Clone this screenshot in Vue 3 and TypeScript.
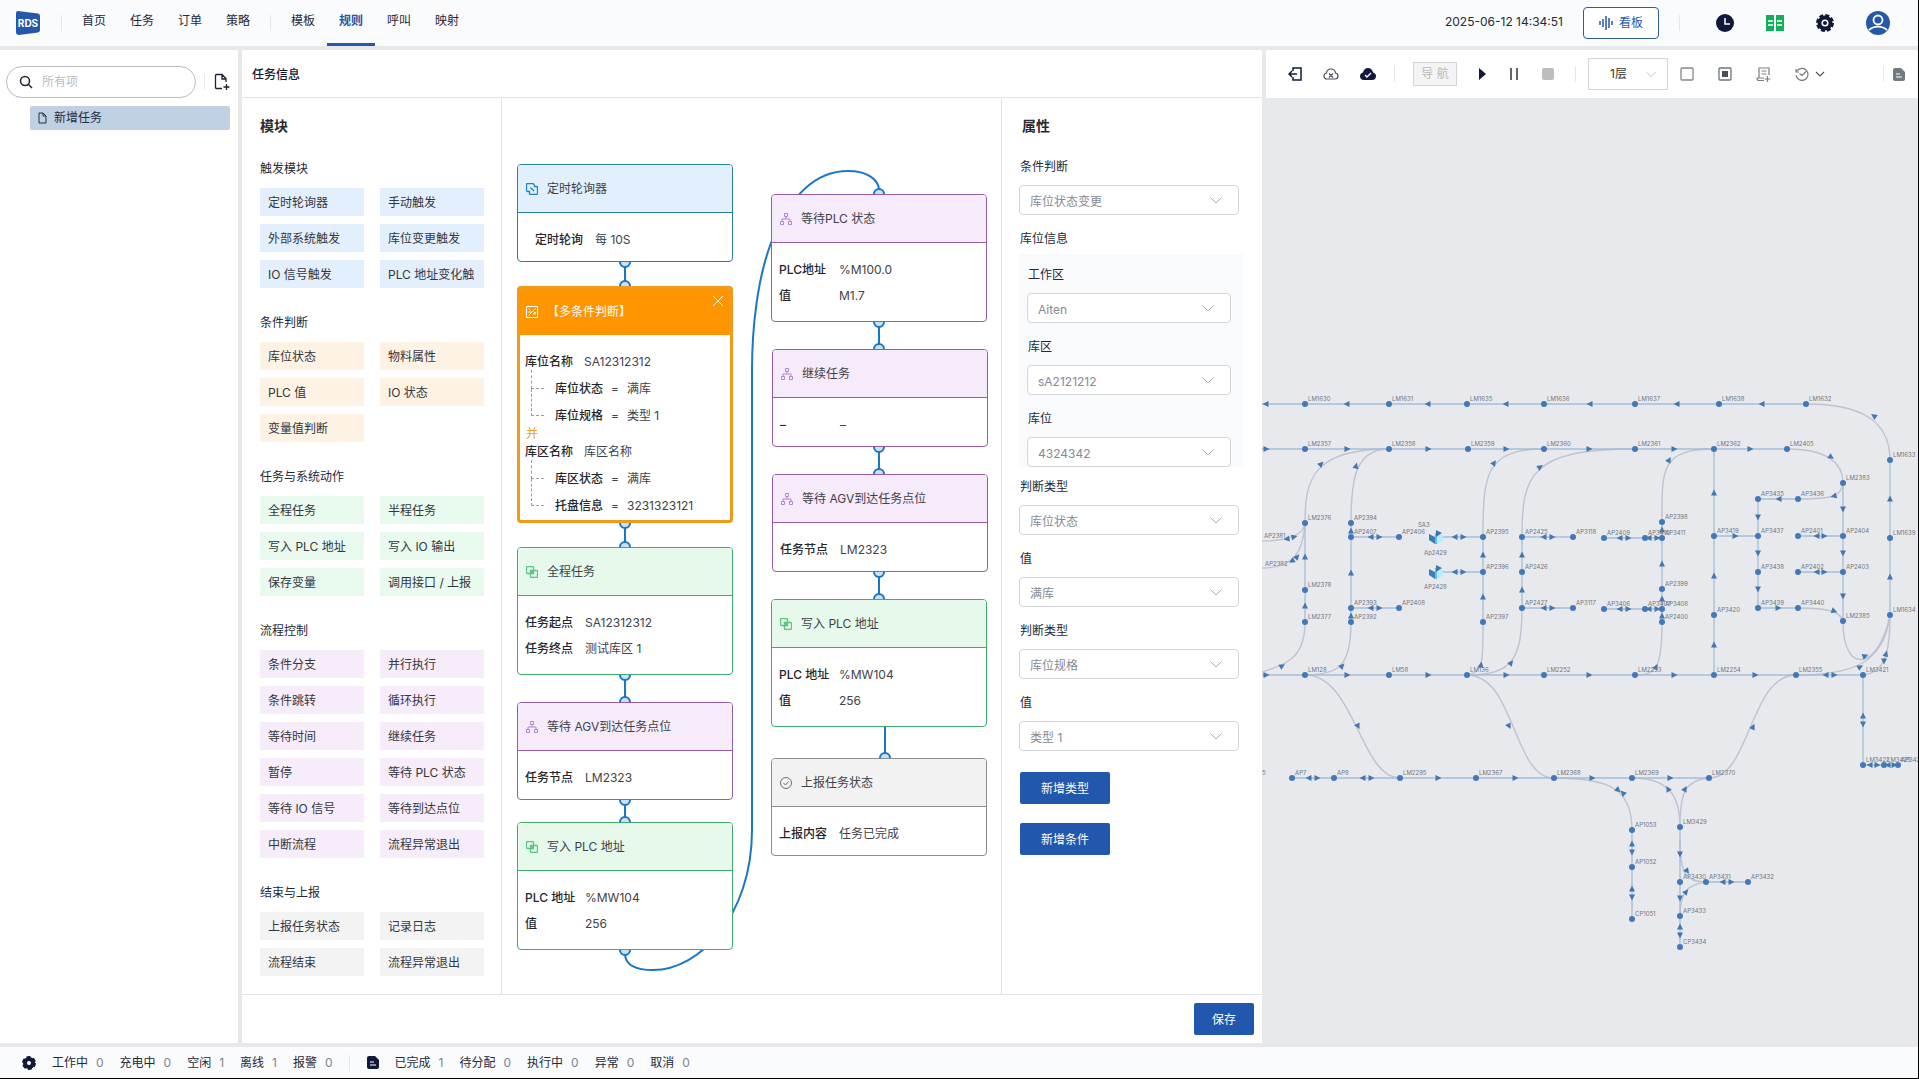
<script setup lang="ts">
import { ref } from 'vue'

type Tone = 'blue' | 'orange' | 'green' | 'purple' | 'gray'
interface Section { title: string; tone: Tone; items: string[] }
interface Row { label: string; value: string }
interface FlowNode { title: string; tone: Tone; icon: string; x: number; y: number; h: number; rows: Row[]; indent?: boolean }
interface Field { id: string; label: string; value: string }
interface Stat { label: string; value: number }

const navLeft = ['首页', '任务', '订单', '策略']
const navRight = ['模板', '规则', '呼叫', '映射']
const keyword = ref('')

const sections: Section[] = [
  { title: '触发模块', tone: 'blue', items: ['定时轮询器', '手动触发', '外部系统触发', '库位变更触发', 'IO 信号触发', 'PLC 地址变化触'] },
  { title: '条件判断', tone: 'orange', items: ['库位状态', '物料属性', 'PLC 值', 'IO 状态', '变量值判断'] },
  { title: '任务与系统动作', tone: 'green', items: ['全程任务', '半程任务', '写入 PLC 地址', '写入 IO 输出', '保存变量', '调用接口 / 上报'] },
  { title: '流程控制', tone: 'purple', items: ['条件分支', '并行执行', '条件跳转', '循环执行', '等待时间', '继续任务', '暂停', '等待 PLC 状态', '等待 IO 信号', '等待到达点位', '中断流程', '流程异常退出'] },
  { title: '结束与上报', tone: 'gray', items: ['上报任务状态', '记录日志', '流程结束', '流程异常退出'] },
]

const flowNodes: FlowNode[] = [
  { title: '定时轮询器', tone: 'blue', icon: 'timer', x: 15, y: 66, h: 98, indent: true, rows: [{ label: '定时轮询', value: '每 10S' }] },
  { title: '全程任务', tone: 'green', icon: 'copy', x: 15, y: 449, h: 128, rows: [{ label: '任务起点', value: 'SA12312312' }, { label: '任务终点', value: '测试库区 1' }] },
  { title: '等待 AGV到达任务点位', tone: 'purple', icon: 'tree', x: 15, y: 604, h: 98, rows: [{ label: '任务节点', value: 'LM2323' }] },
  { title: '写入 PLC 地址', tone: 'green', icon: 'copy', x: 15, y: 724, h: 128, rows: [{ label: 'PLC 地址', value: '%MW104' }, { label: '值', value: '256' }] },
  { title: '等待PLC 状态', tone: 'purple', icon: 'tree', x: 269, y: 96, h: 128, rows: [{ label: 'PLC地址', value: '%M100.0' }, { label: '值', value: 'M1.7' }] },
  { title: '继续任务', tone: 'purple', icon: 'tree', x: 270, y: 251, h: 98, rows: [{ label: '–', value: '–' }] },
  { title: '等待 AGV到达任务点位', tone: 'purple', icon: 'tree', x: 270, y: 376, h: 98, rows: [{ label: '任务节点', value: 'LM2323' }] },
  { title: '写入 PLC 地址', tone: 'green', icon: 'copy', x: 269, y: 501, h: 128, rows: [{ label: 'PLC 地址', value: '%MW104' }, { label: '值', value: '256' }] },
  { title: '上报任务状态', tone: 'gray', icon: 'done', x: 269, y: 660, h: 98, rows: [{ label: '上报内容', value: '任务已完成' }] },
]

const conditions = [
  { label: '库位名称', value: 'SA12312312', subs: [{ label: '库位状态', value: '满库' }, { label: '库位规格', value: '类型 1' }] },
  { label: '库区名称', value: '库区名称', subs: [{ label: '库区状态', value: '满库' }, { label: '托盘信息', value: '3231323121' }] },
]

// x, y of every half-hidden port; links join ports of neighbouring cards
const ports: [number, number][] = [
  [123, 164], [123, 188], [123, 425], [123, 449], [123, 577], [123, 604], [123, 702], [123, 724], [123, 852],
  [377, 96], [377, 224], [377, 251], [377, 349], [377, 376], [377, 474], [377, 501], [383, 660],
]
const links = [
  'M123 169V183', 'M123 430V444', 'M123 582V599', 'M123 707V719',
  'M377 229V246', 'M377 354V371', 'M377 479V496', 'M383 628V655',
  'M123 857C124 867 134 872 151 872C198 872 250 817 250 732V272C250 232 255 182 269 145C288 97 313 73 346 73C366 73 376 82 377 91',
]

const groupFields: Field[] = [
  { id: 'area', label: '工作区', value: 'Aiten' },
  { id: 'zone', label: '库区', value: 'sA2121212' },
  { id: 'slot', label: '库位', value: '4324342' },
]
const tailFields: Field[] = [
  { id: 'type-a', label: '判断类型', value: '库位状态' },
  { id: 'value-a', label: '值', value: '满库' },
  { id: 'type-b', label: '判断类型', value: '库位规格' },
  { id: 'value-b', label: '值', value: '类型 1' },
]

const robotStats: Stat[] = [
  { label: '工作中', value: 0 }, { label: '充电中', value: 0 }, { label: '空闲', value: 1 }, { label: '离线', value: 1 }, { label: '报警', value: 0 },
]
const taskStats: Stat[] = [
  { label: '已完成', value: 1 }, { label: '待分配', value: 0 }, { label: '执行中', value: 0 }, { label: '异常', value: 0 }, { label: '取消', value: 0 },
]

const points: [string, number, number][] = [
  ['LM1630', 1305, 404], ['LM1631', 1389, 404], ['LM1635', 1467, 404], ['LM1636', 1544, 404], ['LM1637', 1635, 404], ['LM1638', 1719, 404], ['LM1632', 1806, 404],
  ['LM2357', 1305, 449], ['LM2358', 1389, 449], ['LM2359', 1468, 449], ['LM2360', 1544, 449], ['LM2361', 1635, 449], ['LM2362', 1714, 449], ['LM2405', 1787, 449],
  ['LM128', 1305, 675], ['LM58', 1389, 675], ['LM136', 1467, 675], ['LM2252', 1544, 675], ['LM2253', 1635, 675], ['LM2254', 1714, 675], ['LM2355', 1796, 675], ['LM3421', 1863, 675],
  ['LM2376', 1305, 523], ['LM2378', 1305, 590], ['LM2377', 1305, 622],
  ['AP2394', 1351, 523], ['AP2407', 1351, 537], ['AP2406', 1399, 537], ['AP2393', 1351, 608], ['AP2408', 1399, 608], ['AP2392', 1351, 622],
  ['AP2395', 1483, 537], ['AP2396', 1483, 572], ['AP2397', 1483, 622],
  ['AP2425', 1522, 537], ['AP2426', 1522, 572], ['AP2427', 1522, 608], ['AP3118', 1573, 537], ['AP3117', 1573, 608],
  ['AP2409', 1604, 538], ['AP3410', 1645, 538], ['AP3411', 1662, 538], ['AP3406', 1604, 609], ['AP3407', 1645, 609], ['AP3408', 1662, 609],
  ['AP2398', 1662, 522], ['AP2399', 1662, 589], ['AP2400', 1662, 622],
  ['AP3419', 1714, 536], ['AP3420', 1714, 615], ['AP3435', 1758, 499], ['AP3436', 1798, 499], ['AP3437', 1758, 536], ['AP3438', 1758, 572], ['AP3439', 1758, 608], ['AP3440', 1798, 608],
  ['AP2401', 1798, 536], ['AP2402', 1798, 572], ['AP2404', 1843, 536], ['AP2403', 1843, 572], ['LM2383', 1843, 483], ['LM2385', 1843, 621],
  ['LM1633', 1890, 460], ['LM1639', 1890, 538], ['LM1634', 1890, 615],
  ['LM3422', 1863, 765], ['LM3425', 1884, 765], ['AP3426', 1898, 765],
  ['AP7', 1292, 778], ['AP8', 1334, 778], ['LM2295', 1400, 778], ['LM2367', 1476, 778], ['LM2368', 1554, 778], ['LM2369', 1632, 778], ['LM2370', 1709, 778],
  ['AP1053', 1632, 830], ['AP1052', 1632, 867], ['CP1051', 1632, 919],
  ['LM3429', 1680, 827], ['AP3430', 1680, 882], ['AP3431', 1706, 882], ['AP3432', 1748, 882], ['AP3433', 1680, 916], ['CP3434', 1680, 947],
]

const captions: [string, number, number][] = [
  ['AP2381', 1264, 538], ['AP2382', 1265, 566], ['SA3', 1418, 527], ['Ap2429', 1424, 555], ['AP2428', 1424, 589], ['5', 1262, 775],
]

// x, y, heading in degrees (0 = right, 90 = down)
const arrows: [number, number, number][] = [
  [1266, 404, 180], [1347, 404, 180], [1428, 404, 180], [1506, 404, 180], [1590, 404, 180], [1677, 404, 180], [1762, 404, 180], [1874, 416, 215],
  [1266, 449, 0], [1347, 449, 0], [1428, 449, 0], [1506, 449, 0], [1589, 449, 0], [1674, 449, 0], [1750, 449, 0], [1831, 457, 32],
  [1266, 675, 0], [1347, 675, 0], [1428, 675, 0], [1506, 675, 0], [1589, 675, 0], [1674, 675, 0], [1755, 675, 0], [1826, 675, 180], [1834, 675, 0],
  [1321, 464, 315], [1282, 666, 330], [1305, 557, 270], [1305, 606, 270], [1287, 539, 170], [1294, 537, 345], [1292, 561, 150], [1297, 557, 310],
  [1356, 466, 285], [1351, 531, 270], [1351, 573, 270], [1351, 616, 270], [1342, 666, 315], [1371, 537, 180], [1379, 537, 0], [1371, 608, 180], [1379, 608, 0],
  [1455, 537, 180], [1463, 537, 0], [1455, 572, 180], [1463, 572, 0],
  [1494, 463, 305], [1483, 555, 270], [1483, 597, 270], [1481, 665, 280],
  [1540, 467, 325], [1522, 555, 270], [1522, 590, 270], [1511, 663, 310], [1544, 537, 180], [1552, 537, 0], [1544, 608, 180], [1552, 608, 0],
  [1620, 538, 180], [1628, 538, 0], [1649, 538, 180], [1657, 538, 0], [1620, 609, 180], [1628, 609, 0], [1649, 609, 180], [1657, 609, 0],
  [1669, 460, 300], [1662, 530, 270], [1662, 564, 270], [1662, 599, 270], [1662, 616, 270], [1656, 667, 300],
  [1714, 493, 270], [1714, 576, 270], [1714, 645, 270], [1735, 536, 0], [1779, 499, 180], [1834, 496, 165], [1778, 608, 0], [1834, 611, 20],
  [1758, 517, 90], [1758, 553, 90], [1758, 589, 90], [1817, 536, 180], [1824, 536, 0], [1817, 572, 180], [1824, 572, 0],
  [1843, 509, 90], [1843, 553, 90], [1843, 596, 90], [1865, 656, 340], [1860, 667, 330], [1884, 661, 90], [1886, 654, 285],
  [1890, 499, 270], [1890, 577, 270], [1863, 716, 270], [1863, 724, 90], [1870, 765, 180], [1877, 765, 0], [1888, 765, 180], [1894, 765, 0],
  [1309, 778, 180], [1317, 778, 0], [1363, 778, 180], [1371, 778, 0], [1438, 778, 0], [1515, 778, 0], [1592, 778, 0], [1670, 778, 0],
  [1358, 726, 62], [1509, 726, 62], [1753, 727, 295], [1618, 790, 40], [1623, 793, 225], [1668, 789, 240], [1685, 789, 300],
  [1632, 844, 270], [1632, 852, 90], [1632, 889, 270], [1632, 897, 90], [1680, 854, 90], [1680, 898, 90], [1680, 927, 270], [1680, 935, 90],
  [1687, 871, 55], [1686, 892, 310], [1723, 882, 180], [1731, 882, 0],
]

const tracks = [
  'M1262 404H1806', 'M1262 449H1787', 'M1262 675H1863', 'M1292 778H1709', 'M1305 523V622', 'M1351 523V622', 'M1351 537H1399', 'M1351 608H1399',
  'M1440 537H1483', 'M1440 572H1483', 'M1483 537V622', 'M1522 537V608', 'M1522 537H1573', 'M1522 608H1573', 'M1604 538H1662', 'M1604 609H1662',
  'M1662 522V622', 'M1714 449V675', 'M1714 536H1758', 'M1758 499V608', 'M1758 499H1798', 'M1758 608H1798', 'M1798 536H1843', 'M1798 572H1843',
  'M1843 483V621', 'M1890 460V615', 'M1863 675V765H1898', 'M1632 830V919', 'M1680 827V947', 'M1706 882H1748',
]
const bends = [
  'M1806 404C1860 404 1890 420 1890 460', 'M1787 449C1822 449 1843 460 1843 483', 'M1305 523C1305 480 1312 449 1389 449', 'M1262 672C1290 664 1305 655 1305 622',
  'M1262 541C1285 541 1304 536 1305 523', 'M1262 568C1294 568 1303 552 1305 523', 'M1351 523C1351 480 1355 449 1389 449', 'M1351 622C1351 665 1340 675 1305 675',
  'M1483 537C1483 475 1485 449 1544 449', 'M1483 622C1483 660 1484 673 1467 675', 'M1522 537C1522 475 1530 449 1635 449', 'M1522 608C1522 660 1512 675 1467 675',
  'M1662 522C1662 470 1660 449 1714 449', 'M1662 622C1662 665 1658 675 1635 675', 'M1843 483C1842 497 1830 499 1798 499', 'M1798 608C1830 608 1840 612 1843 621',
  'M1843 621C1843 678 1880 668 1890 615', 'M1796 675C1850 675 1884 665 1890 615', 'M1863 675C1886 673 1890 650 1890 615',
  'M1305 675C1355 675 1360 778 1400 778', 'M1467 675C1515 675 1513 778 1554 778', 'M1709 778C1750 778 1750 675 1796 675',
  'M1554 778C1612 778 1632 790 1632 830', 'M1632 778C1668 778 1680 795 1680 827', 'M1709 778C1684 780 1680 795 1680 827',
  'M1680 840C1680 874 1686 882 1706 882', 'M1680 916C1680 890 1690 884 1706 882',
]
</script>

<template>
  <div class="app">
    <header class="topbar">
      <svg class="logo" width="26" height="26" viewBox="0 0 26 26" aria-label="RDS">
        <path d="M3 1L23 3.600Q25 4 25 6V20Q25 22 23 22.400L4 25Q1 25 1 22V3Q1 1 3 1Z" fill="#2558a8" />
        <text x="13" y="17" text-anchor="middle" font-size="10" font-weight="700" fill="#fff">RDS</text>
      </svg>
      <i class="sep"></i>
      <nav class="nav">
        <a v-for="n in navLeft" :key="n" href="#">{{ n }}</a>
      </nav>
      <i class="sep"></i>
      <nav class="nav">
        <a v-for="n in navRight" :key="n" href="#" :class="{ active: n === '规则' }">{{ n }}</a>
      </nav>
      <div class="top-right">
        <time>2025-06-12 14:34:51</time>
        <button class="board" type="button">
          <svg width="14" height="16" viewBox="0 0 14 16" stroke="#2558a8" stroke-width="1.500" fill="none"><path d="M1 6v4M4 4v8M7 1v14M10 3v10M13 6v4" /></svg>
          看板
        </button>
        <i class="sep"></i>
        <div class="top-icons">
          <button type="button" aria-label="历史"><svg width="18" height="18" viewBox="0 0 18 18"><circle cx="9" cy="9" r="9" fill="#12183a" /><path d="M9 4v6h5" fill="none" stroke="#fff" stroke-width="1.500" /></svg></button>
          <button type="button" aria-label="地图"><svg width="18" height="18" viewBox="0 0 18 18"><path d="M0 1h8v16H0zM10 1h8v16h-8z" fill="#12b05c" /><path d="M2 7h5M2 11h5M11 7h5M11 11h5" stroke="#fff" stroke-width="1.500" /></svg></button>
          <button type="button" aria-label="设置"><svg width="18" height="18" viewBox="0 0 18 18"><circle cx="9" cy="9" r="7.500" fill="#12183a" /><circle cx="9" cy="9" r="7.500" fill="none" stroke="#12183a" stroke-width="3" stroke-dasharray="3.900 2" /><circle cx="9" cy="9" r="2.800" fill="none" stroke="#fff" stroke-width="1.500" /></svg></button>
          <button type="button" aria-label="用户"><svg width="24" height="24" viewBox="0 0 24 24"><circle cx="12" cy="12" r="12" fill="#2558a8" /><circle cx="12" cy="9" r="4.500" fill="none" stroke="#fff" stroke-width="1.800" /><path d="M3 19C8 14.500 16 14.500 21 19" fill="none" stroke="#fff" stroke-width="1.800" /></svg></button>
        </div>
      </div>
    </header>

    <main class="workspace">
      <aside class="sidebar">
        <div class="search-row">
          <label class="search">
            <svg width="14" height="14" viewBox="0 0 14 14" fill="none" stroke="#1d2233" stroke-width="1.500"><circle cx="6" cy="6" r="4.500" /><path d="M9 9l4 4" /></svg>
            <input v-model="keyword" type="text" placeholder="所有项" aria-label="所有项" />
          </label>
          <i class="sep"></i>
          <button class="add" type="button" aria-label="新增">
            <svg width="16" height="18" viewBox="0 0 16 18" fill="none" stroke="#1d2233" stroke-width="1.300"><path d="M8 15.500H2.500q-1 0-1-1V2.500q0-1 1-1H8l4 4V9M8 1.500V6h4M12.500 11v6M9.500 14h6" /></svg>
          </button>
        </div>
        <a class="task" href="#">
          <svg width="9" height="12" viewBox="0 0 9 12" fill="none" stroke="#1d2c45"><path d="M1 1h4l3 3v7H1zM5 1v3h3" /></svg>
          新增任务
        </a>
      </aside>

      <section class="editor">
        <h1>任务信息</h1>
        <div class="columns">
          <div class="modules">
            <h2>模块</h2>
            <section v-for="s in sections" :key="s.title" class="group">
              <h3>{{ s.title }}</h3>
              <div class="chips">
                <button v-for="i in s.items" :key="i" type="button" class="chip" :class="s.tone">{{ i }}</button>
              </div>
            </section>
          </div>

          <div class="canvas">
            <svg class="wires" aria-hidden="true">
              <path v-for="l in links" :key="l" :d="l" />
              <circle v-for="(p, i) in ports" :key="i" :cx="p[0]" :cy="p[1]" r="5" />
            </svg>
            <article v-for="(n, i) in flowNodes" :key="i" class="card" :class="[n.tone, { indent: n.indent }]" :style="{ left: n.x + 'px', top: n.y + 'px', height: n.h + 'px' }">
              <header>
                <svg width="12" height="12" viewBox="0 0 12 12" fill="none" stroke="currentColor">
                  <path v-if="n.icon === 'timer'" stroke-width="1.300" d="M2.500 8.500H1.500Q.5 8.500 .5 7.500V1.500Q.5.5 1.500.5H6.500Q8.500.5 8.500 3.500H10.500Q11.500 3.500 11.500 4.500V10.500Q11.500 11.500 10.500 11.500H4.500Q3.500 11.500 3.500 10.500V8.500H2M4.500 4.500L8 8" />
                  <path v-else-if="n.icon === 'copy'" stroke-width="1.300" d="M1.500.5h5q1 0 1 1v5q0 1-1 1h-5q-1 0-1-1v-5q0-1 1-1zM5.500 4.500h5q1 0 1 1v5q0 1-1 1h-5q-1 0-1-1v-5q0-1 1-1zM4 4l4 4" />
                  <path v-else-if="n.icon === 'tree'" d="M4.500.5h3v3h-3zM.5 8.500h3v3h-3zM8.500 8.500h3v3h-3zM6 3.500V6M2 8.500V6h8v2.500" />
                  <path v-else d="M11.500 6A5.500 5.500 0 1 1 .5 6A5.500 5.500 0 1 1 11.500 6zM3.500 6L5.500 8L8.500 4.500" />
                </svg>
                <h4>{{ n.title }}</h4>
              </header>
              <dl>
                <div v-for="r in n.rows" :key="r.label" class="row"><dt>{{ r.label }}</dt><dd>{{ r.value }}</dd></div>
              </dl>
            </article>

            <article class="card orange condition">
              <header>
                <svg width="12" height="12" viewBox="0 0 12 12" fill="none" stroke="currentColor"><path d="M.5.5h11v11H.5zM2.500 9.500l7-7M3 2.500l1.500 2M7 8h3M8 6.500h2M2.500 6h3" /></svg>
                <h4>【多条件判断】</h4>
                <button class="close" type="button" aria-label="关闭"><svg width="10" height="10" viewBox="0 0 10 10" stroke="#fff"><path d="M0 0l10 10M10 0L0 10" /></svg></button>
              </header>
              <div class="rules">
                <template v-for="(c, i) in conditions" :key="c.label">
                  <p v-if="i" class="and">并</p>
                  <div class="rule"><b>{{ c.label }}</b><span>{{ c.value }}</span></div>
                  <ul>
                    <li v-for="s in c.subs" :key="s.label"><i class="branch"></i><b>{{ s.label }}</b><em>=</em><span>{{ s.value }}</span></li>
                  </ul>
                </template>
              </div>
            </article>
          </div>

          <form class="props" @submit.prevent>
            <h2>属性</h2>
            <div class="field">
              <label for="judge">条件判断</label>
              <div class="select"><select id="judge"><option>库位状态变更</option></select><svg width="12" height="7" viewBox="0 0 12 7"><path d="M.5.5L6 6L11.500.5" /></svg></div>
            </div>
            <p class="caption">库位信息</p>
            <fieldset aria-label="库位信息">
              <div v-for="f in groupFields" :key="f.id" class="field">
                <label :for="f.id">{{ f.label }}</label>
                <div class="select"><select :id="f.id"><option>{{ f.value }}</option></select><svg width="12" height="7" viewBox="0 0 12 7"><path d="M.5.5L6 6L11.500.5" /></svg></div>
              </div>
            </fieldset>
            <div v-for="f in tailFields" :key="f.id" class="field">
              <label :for="f.id">{{ f.label }}</label>
              <div class="select"><select :id="f.id"><option>{{ f.value }}</option></select><svg width="12" height="7" viewBox="0 0 12 7"><path d="M.5.5L6 6L11.500.5" /></svg></div>
            </div>
            <div class="actions">
              <button class="primary" type="button">新增类型</button>
              <button class="primary" type="button">新增条件</button>
            </div>
          </form>
        </div>
        <footer class="savebar"><button class="primary save" type="button">保存</button></footer>
      </section>

      <section class="map">
        <div class="tools">
          <div class="set clouds">
            <button type="button" aria-label="退出"><svg width="14" height="14" viewBox="0 0 14 14" fill="none" stroke="#12183a" stroke-width="1.500"><path d="M5 4V1h8v12H5v-3M9 7H1M4 4L1 7l3 3" /></svg></button>
            <button type="button" aria-label="取消上传"><svg width="16" height="12" viewBox="0 0 16 12" fill="none" stroke="#4a4e5a" stroke-width="1.200"><path d="M4 11Q1 11 1 8Q1 5.500 3.500 5Q4 1 8 1T12.500 5Q15 5.500 15 8Q15 11 12 11ZM6 5.500l4 4M10 5.500l-4 4" /></svg></button>
            <button type="button" aria-label="上传完成"><svg width="16" height="12" viewBox="0 0 16 12"><path d="M4 12Q0 12 0 8Q0 5.500 3 4.500Q4 0 8 0T13 4.500Q16 5.500 16 8Q16 12 12 12Z" fill="#12183a" /><path d="M5 7l2 2 4-4" fill="none" stroke="#fff" stroke-width="1.300" /></svg></button>
          </div>
          <i class="sep"></i>
          <button class="navi" type="button" disabled>导 航</button>
          <div class="set play">
            <button type="button" aria-label="播放"><svg width="8" height="12" viewBox="0 0 8 12"><path d="M1 0l7 6-7 6z" fill="#12183a" /></svg></button>
            <button type="button" aria-label="暂停"><svg width="8" height="12" viewBox="0 0 8 12"><path d="M1 0v12M7 0v12" stroke="#333" stroke-width="1.500" /></svg></button>
            <button type="button" aria-label="停止"><svg width="12" height="12" viewBox="0 0 12 12"><rect width="12" height="12" rx="2" fill="#bdbdbd" /></svg></button>
          </div>
          <i class="sep"></i>
          <div class="select floor"><select aria-label="楼层"><option>1层</option></select><svg width="10" height="7" viewBox="0 0 12 7"><path d="M.5.5L6 6L11.500.5" /></svg></div>
          <div class="set views">
            <button type="button" aria-label="框选"><svg width="14" height="14" viewBox="0 0 14 14" fill="none" stroke="#858585" stroke-width="1.300"><rect x="1" y="1" width="12" height="12" rx="1" /></svg></button>
            <button type="button" aria-label="居中"><svg width="14" height="14" viewBox="0 0 14 14" fill="none" stroke="#6f7378" stroke-width="1.300"><rect x="1" y="1" width="12" height="12" rx="1" /><path d="M4 4h6v6H4z" fill="#4a4e5a" stroke="none" /></svg></button>
            <button type="button" aria-label="添加备注"><svg width="15" height="15" viewBox="0 0 15 15" fill="none" stroke="#7c7e82" stroke-width="1.200"><path d="M8 13.500H3q-2 0-2-2.500M3 11V1h10v7M5.500 4h5M5.500 7h5M1 11h7M11.500 9v6M8.500 12h6" /></svg></button>
            <button type="button" aria-label="校验"><svg width="14" height="14" viewBox="0 0 14 14" fill="none" stroke="#777" stroke-width="1.200"><path d="M1 2v3h3M1 8A6 6 0 1 0 2 4M4.500 6.500l2.500 2 4-4" /></svg><svg width="10" height="6" viewBox="0 0 10 6" fill="none" stroke="#555" stroke-width="1.200"><path d="M1 1l4 4 4-4" /></svg></button>
          </div>
          <div class="set last">
            <i class="sep"></i>
            <button type="button" aria-label="日志"><svg width="12" height="13" viewBox="0 0 12 13"><path d="M2 0h6l4 4v7q0 2-2 2H2q-2 0-2-2V2q0-2 2-2z" fill="#707a80" /><path d="M3 6h4M3 9h6" stroke="#fff" stroke-width="1.200" /></svg></button>
          </div>
        </div>
        <svg class="plan" viewBox="1262 98 656 945" preserveAspectRatio="xMinYMin meet">
          <path v-for="t in bends" :key="t" :d="t" class="bend" stroke-width="1.400" />
          <path v-for="t in tracks" :key="t" :d="t" class="track" stroke-width="1.300" />
          <g v-for="y in [537, 572]" :key="y" :transform="`translate(1429 ${y - 7})`">
            <path d="M7 3l7 2v6l-7 3z" fill="#b9ecfb" /><path d="M0 4l6 3v7l-6-4z" fill="#3d7cb8" /><path d="M6 3l2-1v12l-2 0z" fill="#58c3ef" /><path d="M7 0l6 3-6 4z" fill="#3f76b5" />
          </g>
          <path v-for="(a, i) in arrows" :key="i" d="M3.500 0L-2.500-3V3Z" class="arrow" :transform="`translate(${a[0]} ${a[1]}) rotate(${a[2]})`" />
          <circle v-for="p in points" :key="p[0]" :cx="p[1]" :cy="p[2]" r="3" class="dot" />
          <text v-for="p in points" :key="p[0]" :x="p[1] + 3" :y="p[2] - 3">{{ p[0] }}</text>
          <text v-for="c in captions" :key="c[0]" :x="c[1]" :y="c[2]">{{ c[0] }}</text>
        </svg>
      </section>
    </main>

    <footer class="statusbar">
      <svg width="14" height="14" viewBox="0 0 14 14"><circle cx="7" cy="7" r="6" fill="#12183a" /><circle cx="7" cy="7" r="6" fill="none" stroke="#12183a" stroke-width="2" stroke-dasharray="4 2.280" /><circle cx="7" cy="7" r="2" fill="#fff" /></svg>
      <dl class="stats"><div v-for="s in robotStats" :key="s.label"><dt>{{ s.label }}</dt><dd>{{ s.value }}</dd></div></dl>
      <i class="sep"></i>
      <svg width="12" height="13" viewBox="0 0 12 13"><path d="M2 0h6l4 4v7q0 2-2 2H2q-2 0-2-2V2q0-2 2-2z" fill="#12183a" /><path d="M3 6h4M3 9h6" stroke="#fff" stroke-width="1.200" /></svg>
      <dl class="stats"><div v-for="s in taskStats" :key="s.label"><dt>{{ s.label }}</dt><dd>{{ s.value }}</dd></div></dl>
    </footer>
  </div>
</template>

<style>
body { margin: 0; background: #e8e8ea; }
</style>

<style scoped>
* { box-sizing: border-box; }
.app { min-height: 100vh; display: flex; flex-direction: column; border-right: 1px solid #000; border-bottom: 1px solid #000; background: #e8e8ea; color: #242938; font: 12px/20px Inter, "Noto Sans CJK SC", sans-serif; overflow: hidden; }
h1, h2, h3, h4, p, dl, dd, ul, fieldset { margin: 0; padding: 0; border: 0; font-size: 12px; font-weight: 400; list-style: none; }
button, input, select { font: inherit; color: inherit; margin: 0; padding: 0; border: 0; background: none; }
a { color: inherit; text-decoration: none; }
svg { display: block; flex: none; }
.sep { flex: none; width: 1px; height: 16px; background: #e6e7ea; }

.topbar { display: flex; align-items: center; height: 46px; padding-left: 15px; background: #fafbfd; }
.logo { margin-right: 20px; }
.nav { display: flex; padding: 0 8px; align-self: stretch; }
.nav a { width: 48px; text-align: center; padding-top: 11px; border-bottom: 3px solid transparent; }
.nav a.active { color: #2558a8; font-weight: 700; border-color: #2558a8; }
.top-right { display: flex; align-items: center; margin-left: auto; padding-right: 28px; }
.top-right time { margin-top: -2px; }
.board { display: flex; align-items: center; justify-content: center; gap: 6px; width: 76px; height: 32px; margin: 0 20px; border: 1px solid #2f5b97; border-radius: 4px; color: #2558a8; background: #fff; }
.top-icons { display: flex; align-items: center; gap: 32px; margin-left: 36px; }

.workspace { flex: 1; display: flex; padding: 4px 0; }
.sidebar { flex: none; width: 238px; margin-right: 4px; padding: 16px 8px 0 6px; background: #fff; }
.search-row { display: flex; align-items: center; }
.search { flex: 1; min-width: 0; display: flex; align-items: center; gap: 9px; height: 32px; padding: 0 12px; border: 1px solid #b9bac6; border-radius: 16px; }
.search input { flex: 1; min-width: 0; outline: none; }
.search input::placeholder { color: #b9bbc2; opacity: 1; }
.search-row .sep { margin: 0 9px 0 8px; }
.task { display: flex; align-items: center; gap: 7px; height: 24px; margin: 8px 0 0 24px; padding-left: 8px; border-radius: 2px; background: #c0d0e3; color: #1d2c45; }

.editor { flex: none; width: 1020px; display: flex; flex-direction: column; background: #fff; }
h1 { height: 48px; padding: 15px 10px 0; border-bottom: 1px solid #e2e3e6; font-weight: 500; color: #12162e; }
h2 { font-size: 14px; font-weight: 700; color: #2b2b2f; height: 20px; }
.columns { flex: 1; display: flex; }
.modules { flex: none; width: 260px; padding: 18px 17px 17px 18px; border-right: 1px solid #e2e3e6; }
.modules h2 { margin-bottom: 23px; }
.group + .group { margin-top: 25px; }
.chips { display: grid; grid-template-columns: 104px 104px; gap: 8px 16px; margin-top: 9px; }
.chip { height: 28px; padding: 2px 0 0 8px; text-align: left; white-space: nowrap; color: #33363f; }
.chip.blue { background: #e4effd; }
.chip.orange { background: #fef2e4; }
.chip.green { background: #e9faee; }
.chip.purple { background: #f6ecfa; }
.chip.gray { background: #f3f3f3; }

.canvas { flex: 1; position: relative; }
.wires { position: absolute; inset: 0; width: 100%; height: 100%; }
.wires path { fill: none; stroke: #1b76c6; stroke-width: 2; }
.wires circle { fill: #c9e2fa; stroke: #1b76c6; stroke-width: 2; }
.card { position: absolute; width: 216px; border: 1px solid var(--line); border-radius: 4px; background: #fff; overflow: hidden; color: #3f4148; }
.card.blue { --line: #2a8094; --fill: #e2effd; --icon: #1b85c8; }
.card.green { --line: #3fae6c; --fill: #e6f9ea; --icon: #58c583; }
.card.purple { --line: #955ca8; --fill: #f6ebfb; --icon: #b283d2; }
.card.gray { --line: #8c8c8e; --fill: #f2f2f2; --icon: #6d6d6f; }
.card.orange { --line: #f09a1a; --fill: #ff9500; --icon: #fff; }
.card header { display: flex; align-items: center; gap: 9px; height: 48px; padding: 0 8px; border-bottom: 1px solid var(--line); background: var(--fill); }
.card header svg { color: var(--icon); }
.card dl { padding: 14px 7px 0; }
.card.indent dl { padding-left: 17px; }
.row { display: flex; height: 26px; line-height: 26px; }
.row dt { width: 60px; font-weight: 500; color: #24262c; white-space: nowrap; }
.condition { left: 15px; top: 188px; border-width: 3px; }
.condition header { height: 46px; padding: 0 6px; border: 0; color: #fff; }
.close { align-self: flex-start; margin: 7px 1px 0 auto; }
.rules { padding: 13px 5px 1px; line-height: 27px; }
.rules b { font-weight: 500; color: #24262c; }
.rule { display: flex; height: 27px; }
.rule b { width: 59px; }
.rules li { display: flex; height: 27px; padding-left: 6px; }
.rules li b { margin: 0 8px 0 11px; }
.rules em { font-style: normal; margin-right: 8px; }
.branch { width: 13px; height: 27px; margin-top: -13px; border: dashed #9a9ca3; border-width: 0 0 1px 1px; }
.rules li:first-child .branch { height: 19px; margin-top: -5px; }
.and { height: 9px; line-height: 10px; color: #e8a02c; padding-left: 1px; }

.props { flex: none; width: 261px; padding: 18px 14px 0 17px; border-left: 1px solid #e2e3e6; }
.props h2 { margin: 0 0 21px 3px; }
.field { width: 220px; margin-bottom: 14px; }
.field label, .caption { display: block; height: 20px; padding-left: 1px; margin-bottom: 8px; }
.caption { margin-bottom: 5px; }
.select { display: grid; align-items: center; height: 30px; border: 1px solid #d3d4d8; border-radius: 4px; background: #fff; }
.select > * { grid-area: 1 / 1; }
.select select { width: 100%; height: 100%; padding: 3px 10px 0; appearance: none; color: #858a96; outline: none; }
.select svg { justify-self: end; margin-right: 16px; pointer-events: none; fill: none; stroke: #a9abb2; }
fieldset { width: 224px; padding: 11px 8px 0; margin-bottom: 10px; background: #f9fafc; }
fieldset .field { width: 204px; }
fieldset .field:last-child { margin-bottom: 0; }
.actions { display: grid; gap: 19px; justify-items: start; margin: 21px 0 0 1px; }
.primary { width: 90px; height: 32px; padding-top: 2px; border-radius: 2px; background: #2257ae; color: #fff; }
.savebar { display: flex; justify-content: flex-end; height: 49px; padding: 8px; border-top: 1px solid #e2e3e6; }
.save { width: 60px; }

.map { flex: 1; min-width: 0; display: flex; flex-direction: column; background: #e7e9ed; }
.tools { display: flex; align-items: center; height: 48px; margin-left: 4px; padding: 0 13px 0 22px; background: #fff; }
.set { display: flex; align-items: center; }
.clouds { gap: 21px; margin-right: 18px; }
.navi { width: 44px; height: 24px; margin: 0 21px 0 18px; border: 1px solid #d4d4d4; background: #f4f4f4; color: #b9b9b9; }
.play { gap: 24px; margin-right: 21px; }
.floor { width: 80px; height: 32px; margin: 0 12px; border-radius: 0; }
.floor select { padding: 0 0 0 21px; color: #333; }
.floor svg { margin-right: 11px; stroke: #bbb; }
.views { gap: 24px; }
.views button { display: flex; align-items: center; gap: 6px; }
.last { gap: 9px; margin-left: auto; }
.plan { flex: 1; width: 100%; min-height: 0; }
.plan text { font-size: 6px; fill: #73767d; }
.bend { fill: none; stroke: #bdc3d0; }
.track { fill: none; stroke: #a3bdd8; }
.arrow { fill: #4377b0; }
.dot { fill: #4178ba; }

.statusbar { display: flex; align-items: center; height: 31px; padding-left: 22px; background: #fafbfd; }
.stats { display: flex; gap: 16px; margin: 0 16px; }
.stats div { display: flex; gap: 8px; }
.stats dd { color: #80838b; }
.statusbar .sep { margin-right: 17px; }
</style>
